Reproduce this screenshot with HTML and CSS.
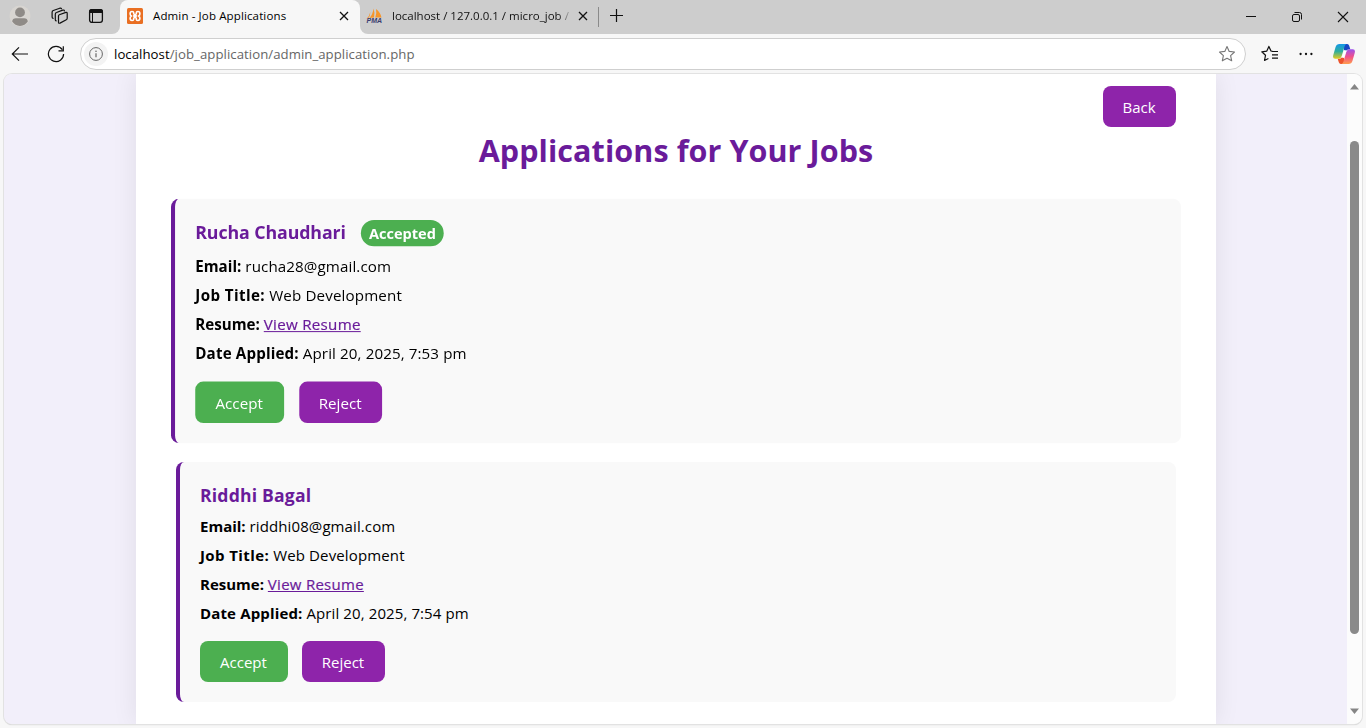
FILE: index.html
```
<!DOCTYPE html>
<html lang="en">
<head>
<meta charset="utf-8">
<title>Admin - Job Applications</title>
<link rel="stylesheet" href="styles.css">
</head>
<body>
<div class="browser">
  <header class="tabstrip">
    <div class="strip-tools">
      <svg class="avatar" width="22" height="22" viewBox="0 0 22 22"><circle cx="11" cy="11" r="10.500" fill="#d8d5d1"/><circle cx="11" cy="7.400" r="4.900" fill="#8f8b87"/><path d="M3.200 16.600c0-2.300 1.600-3.400 3.600-3.400h8.400c2 0 3.600 1.100 3.600 3.400-1.800 2.600-4.500 4.400-7.800 4.400s-6-1.800-7.800-4.400z" fill="#8f8b87"/></svg>
      <svg class="workspaces" width="18" height="18" viewBox="0 0 18 18" fill="none" stroke="#111" stroke-width="1.200" stroke-linejoin="round" stroke-linecap="round"><path d="M8.300 7.700 14.900 5.400q1.300-.4 1.300 1v4.900q0 1-.9 1.400l-6.300 3.400q-1.500.6-1.500-.9V8.900q0-.9.800-1.200z"/><path d="M5.200 13.900q-.9-.2-.9-1.200V7.200q0-1.300 1.200-1.700l6.200-2.400q1.500-.4 1.700.8"/><path d="M2.100 11.300q-1-.2-1-1.300V5.200q0-1.300 1.200-1.700L8.800 1.200q1.300-.3 1.700.6"/></svg>
      <svg class="tabactions" width="16" height="16" viewBox="0 0 16 16"><rect x="1.600" y="1.600" width="12.800" height="12.800" rx="2.400" fill="none" stroke="#111" stroke-width="1.300"/><path d="M1 5V3.500Q1 1 3.500 1h9Q15 1 15 3.500V5z" fill="#111"/><path d="M4.500 5v9.500" stroke="#111" stroke-width="1"/></svg>
    </div>
    <div class="tab tab-active">
      <svg width="16" height="16" viewBox="0 0 16 16"><rect width="16" height="16" rx="1.500" fill="#e96f22"/><path d="M6.700 6.200V4.800q0-1.300-1.600-1.300-2 0-2 2.200 0 1.500 1.200 2.300-1.200.8-1.200 2.300 0 2.200 2 2.200 1.600 0 1.600-1.300V9.800M9.300 6.200V4.800q0-1.300 1.600-1.300 2 0 2 2.200 0 1.500-1.200 2.300 1.200.8 1.200 2.300 0 2.200-2 2.200-1.600 0-1.600-1.300V9.800M6 8h4M6.700 6.200q1.300.8 2.600 0M6.700 9.800q1.300-.8 2.600 0" fill="none" stroke="#fff" stroke-width="1.600"/></svg>
      <span class="tab-title t-admin">Admin - Job Applications</span>
      <svg class="tab-close" width="10" height="10" viewBox="0 0 10 10"><path d="M1 1l8 8M9 1L1 9" stroke="#111" stroke-width="1.300"/></svg>
    </div>
    <div class="tab tab-idle">
      <svg width="18" height="16" viewBox="0 0 18 16"><path d="M7.500.5Q9 4.500 8 9.500L3.500 10Q6.800 6.500 7.500.5zM10 1q4.500 3.500 5.500 8.500L9.300 9.600Q11 5 10 1zM4.300 4Q4.500 8 2 10.500l-1.500.3Q3.600 8 4.300 4z" fill="#f6962b"/><text class="pma" x=".5" y="15.200">PMA</text></svg>
      <span class="tab-title t-local">localhost / 127.0.0.1 / micro_job /</span>
      <svg class="tab-close" width="10" height="10" viewBox="0 0 10 10"><path d="M1 1l8 8M9 1L1 9" stroke="#111" stroke-width="1.300"/></svg>
    </div>
    <div class="tab-divider"></div>
    <svg class="tab-new" width="14" height="14" viewBox="0 0 14 14"><path d="M6.500 0v13M0 6.500h13" stroke="#111" stroke-width="1.200"/></svg>
    <div class="window-controls">
      <svg width="12" height="12" viewBox="0 0 12 12"><path d="M1 5.500h10" stroke="#111"/></svg>
      <svg width="12" height="12" viewBox="0 0 12 12" fill="none" stroke="#111"><rect x="1.500" y="3.500" width="7" height="7" rx="1.500"/><path d="M3.500 1.500h5q2 0 2 2v5"/></svg>
      <svg width="12" height="12" viewBox="0 0 12 12"><path d="M1 1l10 10M11 1L1 11" stroke="#111" stroke-width="1.100"/></svg>
    </div>
  </header>
  <div class="toolbar">
    <svg class="nav-back" width="18" height="16" viewBox="0 0 18 16" fill="none" stroke="#111" stroke-width="1.200"><path d="M17 8H1.500M8 1.300 1.300 8 8 14.700"/></svg>
    <svg class="nav-reload" width="18" height="18" viewBox="0 0 18 18" fill="none" stroke="#111" stroke-width="1.200"><path d="M16.600 9A7.600 7.600 0 1 1 15.300 4.700M16.300 1.200v4.600h-4.800"/></svg>
    <div class="address">
      <span class="site-info"><svg width="14" height="14" viewBox="0 0 14 14"><circle cx="7" cy="7" r="6.400" fill="none" stroke="#666" stroke-width="1"/><path d="M7 6.300v3.900" stroke="#666" stroke-width="1.200"/><circle cx="7" cy="4.300" r=".8" fill="#666"/></svg></span>
      <span class="url"><span class="host">localhost</span>/job_application/admin_application.php</span>
      <svg class="star" width="18" height="18" viewBox="0 0 18 18"><path d="M9 1.600l2.200 4.800 5.300.6-3.900 3.600 1.100 5.200L9 13.200l-4.700 2.600 1.100-5.200L1.500 7l5.300-.6z" fill="none" stroke="#777" stroke-width="1.100" stroke-linejoin="round"/></svg>
    </div>
    <svg class="favorites" width="18" height="18" viewBox="0 0 18 18" fill="none" stroke="#111" stroke-width="1.200" stroke-linejoin="round"><path d="M11.500 6.300 10 6 7.900 1.400 5.800 6.100l-5 .7 3.700 3.500-1 5.200 3.900-2M11 6.500h6M11 9.800h6M11 13.200h6"/></svg>
    <svg class="more" width="14" height="4" viewBox="0 0 14 4" fill="#111"><circle cx="1.600" cy="2" r="1.150"/><circle cx="7" cy="2" r="1.150"/><circle cx="12.400" cy="2" r="1.150"/></svg>
    <svg class="copilot" width="22" height="20" viewBox="0 0 22 20">
      <defs>
        <linearGradient id="cool" x1="0" y1="0" x2="0" y2="1"><stop offset="0" stop-color="#1497e8"/><stop offset=".5" stop-color="#2fae9c"/><stop offset="1" stop-color="#e8cb1d"/></linearGradient>
        <linearGradient id="warm" x1="0" y1="0" x2="0" y2="1"><stop offset="0" stop-color="#9b51ee"/><stop offset=".5" stop-color="#f0508b"/><stop offset="1" stop-color="#ff9d4c"/></linearGradient>
      </defs>
      <path d="M11 0h3.200q1.500 0 2 1.700l1.100 3.500q-3.300-.2-4.300 1.600L11 6z" fill="#1747c4"/>
      <path d="M11 20H7.800q-1.500 0-2-1.700l-1.100-3.500q3.300.2 4.300-1.600L11 14z" fill="#ec532b"/>
      <path d="M6.500 0h7q-1.300.3-1.900 2.300L8.700 12q-.8 2.800-3.200 2.800H2.200Q-.7 14.800.3 11L2.500 3.300Q3.500 0 6.500 0z" fill="url(#cool)"/>
      <path d="M15.500 20h-7q1.300-.3 1.900-2.300L13.300 8q.8-2.800 3.200-2.800h3.300q2.900 0 1.900 3.800l-2.200 7.700q-1 3.300-4 3.300z" fill="url(#warm)"/>
      <path d="M11.600 6.500h1.800l-2.600 7H8.600z" fill="#fff"/>
    </svg>
  </div>
  <div class="viewport">
    <main class="page">
      <section class="container">
        <div class="top-row"><a class="btn btn-back">Back</a></div>
        <h1 class="heading">Applications for Your Jobs</h1>
        <article class="card card-raised">
          <h2 class="name name-rucha"><span>Rucha Chaudhari</span><span class="badge">Accepted</span></h2>
          <p class="field email"><b>Email:</b> rucha28@gmail.com</p>
          <p class="field title"><b>Job Title:</b> Web Development</p>
          <p class="field"><b>Resume:</b> <a class="resume">View Resume</a></p>
          <p class="field date"><b>Date Applied:</b> April 20, 2025, 7:53 pm</p>
          <div class="actions"><a class="btn btn-accept">Accept</a><a class="btn btn-reject">Reject</a></div>
        </article>
        <article class="card">
          <h2 class="name"><span>Riddhi Bagal</span></h2>
          <p class="field email"><b>Email:</b> riddhi08@gmail.com</p>
          <p class="field title"><b>Job Title:</b> Web Development</p>
          <p class="field"><b>Resume:</b> <a class="resume">View Resume</a></p>
          <p class="field date"><b>Date Applied:</b> April 20, 2025, 7:54 pm</p>
          <div class="actions"><a class="btn btn-accept">Accept</a><a class="btn btn-reject">Reject</a></div>
        </article>
      </section>
    </main>
    <div class="scrollbar">
      <svg width="9" height="6" viewBox="0 0 9 6"><path d="M0 5.500 4.500 0 9 5.500z" fill="#858585"/></svg>
      <div class="thumb"></div>
      <svg class="scroll-down" width="9" height="6" viewBox="0 0 9 6"><path d="M0 .5 4.500 6 9 .5z" fill="#858585"/></svg>
    </div>
  </div>
</div>
</body>
</html>
```
FILE: styles.css
```
* { box-sizing: border-box; }
body { margin: 0; font-family: "Open Sans", "Noto Sans", sans-serif; color: #000; }
svg { display: block; flex: none; }
.browser { width: 1366px; height: 728px; overflow: hidden; background: #f7f7f7; display: flex; flex-direction: column; }

.tabstrip { height: 34px; flex: none; display: flex; background: linear-gradient(to right, #f7f7f7 370px, #cdcdcd 370px); }
.strip-tools { width: 120px; display: flex; align-items: center; padding: 0 0 2px 9px; background: #cdcdcd; border-bottom-right-radius: 8px; }
.workspaces { margin-left: 20px; }
.tabactions { margin-left: 19px; }
.tab { display: flex; align-items: center; height: 34px; padding-bottom: 2px; }
.tab-active { width: 240px; padding-left: 7px; background: #f7f7f7; border-radius: 8px 8px 0 0; box-shadow: 0 -8px 0 8px #cdcdcd; clip-path: inset(0); }
.tab-idle { width: 237px; padding-left: 6px; background: #cdcdcd; border-bottom-left-radius: 8px; }
.tab-title { font-size: 11.500px; white-space: nowrap; margin-left: 10px; line-height: 16px; }
.t-admin { width: 176px; letter-spacing: .13px; }
.t-local { margin-left: 8px; width: 178px; background: linear-gradient(to right, #111 166px, #aaa 178px); -webkit-background-clip: text; color: transparent; }
.tab-close { margin-left: 10px; }
.tab-idle .tab-close { margin-left: 8px; }
.pma { font: italic bold 7px "Liberation Sans", sans-serif; fill: #3a3d70; }
.tab-divider { width: 1px; height: 20px; margin: 7px 0 0 1px; background: #8a8a8a; }
.tab-new { margin: 9px 0 0 11px; }
.window-controls { margin-left: auto; display: flex; gap: 34px; padding: 11px 17px 0 0; }

.toolbar { height: 39px; flex: none; display: flex; align-items: center; padding-left: 11px; }
.nav-reload { margin-left: 18px; }
.address { width: 1166px; height: 32px; margin: 1px 0 0 15px; border: 1px solid #cfcfcf; border-radius: 16px; background: #fff; display: flex; align-items: center; }
.site-info { width: 24px; height: 24px; margin-left: 3px; border-radius: 50%; background: #f3f3f3; display: flex; align-items: center; justify-content: center; }
.url { font-size: 13.200px; letter-spacing: .05px; color: #666; margin-left: 6px; line-height: 20px; flex: 1; }
.host { color: #000; }
.star { margin-right: 9px; }
.favorites { margin-left: 15px; }
.more { margin-left: 20px; }
.copilot { margin-left: 20px; }

.viewport { width: 1358px; height: 650px; flex: none; margin: 1px 0 0 4px; border-radius: 8px; overflow: hidden; display: flex; box-shadow: 0 0 0 1px #e2e2e2, 0 1px 1px #c4c4c4; }
.page { width: 1343px; background: #f2effa; display: flex; padding-left: 132px; overflow: hidden; }
.container { width: 1080px; flex: none; padding: 12px 40px 0; background: #fff; box-shadow: 0 0 24px rgba(0, 0, 0, .08); }
.top-row { display: flex; justify-content: flex-end; }
.btn { height: 41px; border-radius: 8px; color: #fff; font-size: 15px; display: flex; align-items: center; justify-content: center; padding: 1px 1px 0 0; }
.btn-back { width: 73px; background: #8e24aa; }
.heading { margin: 2px 0 29px; font-size: 30.500px; letter-spacing: .08px; line-height: 42px; font-weight: 700; color: #6a1b9a; text-align: center; }
.card { height: 240px; padding: 20px; border-left: 4px solid #6a1b9a; border-radius: 8px; background: #f9f9f9; }
.card-raised { height: 242px; margin-bottom: 20px; transform: scale(1.01); }
.name { height: 26px; margin: 0 0 8px; display: flex; align-items: center; font-size: 17.600px; font-weight: 700; color: #6a1b9a; letter-spacing: .18px; }
.name-rucha { height: 28px; letter-spacing: -.1px; }
.name-rucha span:first-child { padding-bottom: 2px; }
.badge { margin-left: 15px; width: 82px; height: 26px; border-radius: 13px; background: #4caf50; color: #fff; font-size: 14.400px; letter-spacing: 0; display: flex; align-items: center; justify-content: center; }
.field { margin: 0 0 8px; font-size: 15px; line-height: 21px; white-space: nowrap; }
.email { letter-spacing: .1px; }
.email b { letter-spacing: 0; }
.title { letter-spacing: .14px; }
.title b { letter-spacing: .4px; }
.date { letter-spacing: .1px; }
.date b { letter-spacing: .15px; }
.resume { color: #6a1b9a; text-decoration: underline; -webkit-text-stroke: .2px #6a1b9a; letter-spacing: .27px; }
.actions { display: flex; gap: 14px; margin-top: 17px; }
.card-raised .actions { gap: 15px; }
.btn-accept { width: 88px; background: #4caf50; }
.btn-reject { width: 83px; background: #8e24aa; }
.card-raised .btn-reject { width: 82px; }

.scrollbar { width: 15px; background: #fcfcfc; display: flex; flex-direction: column; align-items: center; padding: 10px 0 10px; }
.thumb { width: 9px; height: 493px; margin-top: 51px; border-radius: 5px; background: #8a8a8a; }
.scroll-down { margin-top: auto; }
```
